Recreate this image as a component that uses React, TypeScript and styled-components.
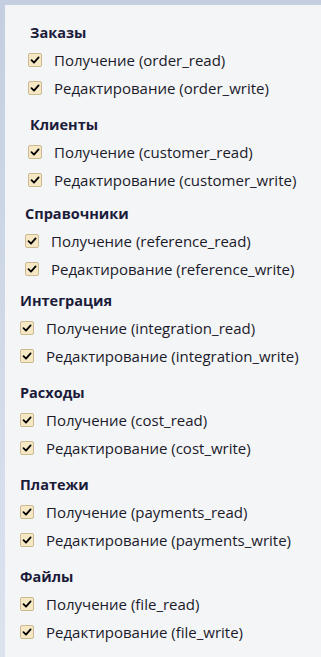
import styled, { createGlobalStyle } from "styled-components";

const GlobalStyle = createGlobalStyle`
    html, body {
        margin: 0;
        padding: 0;
    }
    body {
        background: linear-gradient(180deg, #c4cee0 0%, #d3dbe9 60%, #dce3ef 100%);
        font-family: "Open Sans", "Noto Sans", sans-serif;
        color: #1c1c2e;
    }
`;

const Panel = styled.div`
    margin: 5px 0 0 5px;
    height: 652px;
    background-color: #f4f5f7;
    padding-top: 15px;
    box-sizing: border-box;
    display: flex;
    flex-direction: column;
`;

const Section = styled.div<{ $indent: number; $gap: number }>`
    padding-left: ${props => props.$indent}px;
    margin-top: ${props => props.$gap}px;
    display: flex;
    flex-direction: column;
`;

const Title = styled.div<{ $shift: number }>`
    padding-left: ${props => props.$shift}px;
    font-weight: 700;
    font-size: 14.5px;
    line-height: 26px;
    color: #1b1b3a;
`;

const Row = styled.label`
    display: flex;
    flex-direction: row;
    align-items: center;
    gap: 12px;
    height: 28px;
    font-size: 15px;
    color: #1a1a2a;
`;

const Box = styled.span`
    width: 12px;
    height: 12px;
    border: 1px solid #cdb98f;
    border-radius: 2px;
    background-color: #f6e7c5;
    display: flex;
    align-items: center;
    justify-content: center;
    flex-shrink: 0;
`;

const sections = [
    { title: "Заказы", key: "order", indent: 23, shift: 2, gap: 0 },
    { title: "Клиенты", key: "customer", indent: 23, shift: 2, gap: 10 },
    { title: "Справочники", key: "reference", indent: 20, shift: 0, gap: 7 },
    { title: "Интеграция", key: "integration", indent: 15, shift: 0, gap: 5 },
    { title: "Расходы", key: "cost", indent: 15, shift: 0, gap: 10 },
    { title: "Платежи", key: "payments", indent: 15, shift: 0, gap: 10 },
    { title: "Файлы", key: "file", indent: 15, shift: 0, gap: 10 },
];

function Check() {
    return (
        <Box>
            <svg width="10" height="10" viewBox="0 0 10 10">
                <path d="M1.5 5.2 L4 7.6 L8.6 2.4" fill="none" stroke="#000" strokeWidth="1.8" strokeLinecap="round" strokeLinejoin="round" />
            </svg>
        </Box>
    );
}

export default function App() {
    return (
        <>
            <GlobalStyle />
            <Panel>
                {sections.map((s) => (
                    <Section key={s.key} $indent={s.indent} $gap={s.gap}>
                        <Title $shift={s.shift}>{s.title}</Title>
                        <Row><Check />Получение ({s.key}_read)</Row>
                        <Row><Check />Редактирование ({s.key}_write)</Row>
                    </Section>
                ))}
            </Panel>
        </>
    );
}
